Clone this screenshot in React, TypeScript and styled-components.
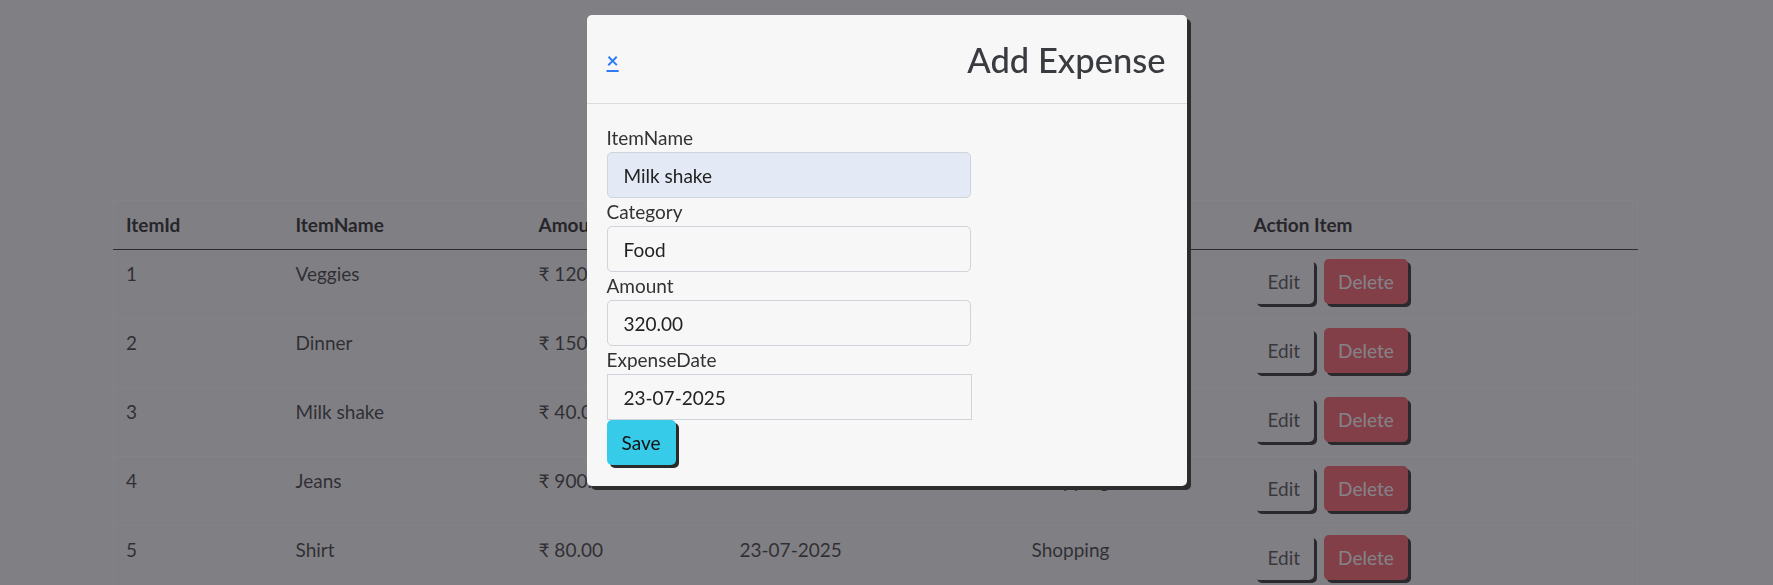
import React from 'react';
import styled, { createGlobalStyle } from 'styled-components';

type Expense = {
  id: number;
  name: string;
  amount: string;
  date: string;
  category: string;
};

const expenses: Expense[] = [
  { id: 1, name: 'Veggies', amount: '120.00', date: '23-07-2025', category: 'Food' },
  { id: 2, name: 'Dinner', amount: '150.00', date: '23-07-2025', category: 'Food' },
  { id: 3, name: 'Milk shake', amount: '40.00', date: '23-07-2025', category: 'Food' },
  { id: 4, name: 'Jeans', amount: '900.00', date: '23-07-2025', category: 'Shopping' },
  { id: 5, name: 'Shirt', amount: '80.00', date: '23-07-2025', category: 'Shopping' },
];

const columns = [
  { label: 'ItemId', width: 170 },
  { label: 'ItemName', width: 243 },
  { label: 'Amount', width: 201 },
  { label: 'ExpenseDate', width: 292 },
  { label: 'Category', width: 222 },
  { label: 'Action Item', width: 396 },
];

const GlobalStyle = createGlobalStyle`
  html, body {
    margin: 0;
    background: #f7f7f7;
    font-family: Lato, "Noto Sans", sans-serif;
    color: #191919;
    overflow: hidden;
  }
  * {
    box-sizing: border-box;
  }
`;

const Page = styled.main`
  padding: 200px 0 0 113px;
`;

const Table = styled.table`
  width: 1524px;
  border-collapse: collapse;
  border: 1px solid #ffffff;
  table-layout: fixed;
  font-size: 19px;
`;

const Th = styled.th<{ $width: number }>`
  width: ${({ $width }) => $width}px;
  padding: 12px;
  line-height: 24px;
  text-align: left;
  font-weight: 700;
  color: #000;
  border-bottom: 1px solid #111;
`;

const Row = styled.tr`
  border-bottom: 1px solid #ffffff;
`;

const Td = styled.td`
  padding: 9px 12px 11px;
  line-height: 30px;
  vertical-align: top;
  color: #1b1b1b;
`;

const Actions = styled.div`
  display: flex;
  gap: 10px;
  padding-bottom: 3px;
`;

const ActionButton = styled.button<{ $danger?: boolean }>`
  height: 45px;
  padding: 0 14px;
  border: none;
  border-radius: 5px;
  font-family: inherit;
  font-size: 19px;
  background: ${({ $danger }) => ($danger ? '#ff4752' : '#f7f7f7')};
  color: ${({ $danger }) => ($danger ? '#ffffff' : '#333333')};
  box-shadow: 3px 3px 0 #0c0c0c;
  cursor: pointer;
`;

const Backdrop = styled.div`
  position: fixed;
  inset: 0;
  background: rgba(60, 58, 66, 0.636);
  display: flex;
  justify-content: center;
  align-items: flex-start;
  padding-top: 15px;
`;

const Modal = styled.div`
  width: 600px;
  background: #f7f7f7;
  border-radius: 5px;
  box-shadow: 4px 4px 0 #2d2d2d;
`;

const ModalHeader = styled.header`
  height: 89px;
  padding: 0 21px 0 20px;
  display: flex;
  align-items: center;
  justify-content: space-between;
  border-bottom: 1px solid #dcdcdc;
`;

const CloseLink = styled.a`
  color: #2f7bf5;
  font-size: 21px;
  font-weight: 700;
  text-decoration: underline;
  cursor: pointer;
`;

const Title = styled.h2`
  margin: 0;
  font-size: 34.5px;
  font-weight: 500;
  color: #393b40;
`;

const ModalBody = styled.form`
  padding: 20px 20px 21px;
  display: flex;
  flex-direction: column;
  align-items: flex-start;
`;

const Label = styled.label`
  display: block;
  font-size: 19px;
  line-height: 28px;
  color: #333333;
`;

const Input = styled.input<{ $filled?: boolean; $square?: boolean }>`
  width: ${({ $square }) => ($square ? 365 : 364)}px;
  height: 46px;
  padding: 0 16px;
  border: 1px solid #ced4da;
  border-radius: ${({ $square }) => ($square ? 0 : 5)}px;
  background: ${({ $filled }) => ($filled ? '#e3e9f5' : '#f7f7f7')};
  font-family: inherit;
  font-size: 19px;
  color: #222222;
  outline: none;
`;

const SaveButton = styled.button`
  height: 45px;
  padding: 0 15px;
  border: none;
  border-radius: 5px;
  background: #35cbe9;
  color: #111111;
  font-family: inherit;
  font-size: 19px;
  box-shadow: 3px 3px 0 #2a2a2a;
  cursor: pointer;
`;

const fields = [
  { label: 'ItemName', value: 'Milk shake', filled: true },
  { label: 'Category', value: 'Food' },
  { label: 'Amount', value: '320.00' },
  { label: 'ExpenseDate', value: '23-07-2025', square: true },
];

export default function App() {
  return (
    <>
      <GlobalStyle />
      <Page>
        <Table>
          <thead>
            <tr>
              {columns.map((c) => (
                <Th key={c.label} $width={c.width}>
                  {c.label}
                </Th>
              ))}
            </tr>
          </thead>
          <tbody>
            {expenses.map((e) => (
              <Row key={e.id}>
                <Td>{e.id}</Td>
                <Td>{e.name}</Td>
                <Td>₹ {e.amount}</Td>
                <Td>{e.date}</Td>
                <Td>{e.category}</Td>
                <Td>
                  <Actions>
                    <ActionButton type="button">Edit</ActionButton>
                    <ActionButton type="button" $danger>
                      Delete
                    </ActionButton>
                  </Actions>
                </Td>
              </Row>
            ))}
          </tbody>
        </Table>
      </Page>

      <Backdrop>
        <Modal>
          <ModalHeader>
            <CloseLink href="#">×</CloseLink>
            <Title>Add Expense</Title>
          </ModalHeader>
          <ModalBody onSubmit={(ev) => ev.preventDefault()}>
            {fields.map((f) => (
              <React.Fragment key={f.label}>
                <Label>{f.label}</Label>
                <Input
                  defaultValue={f.value}
                  $filled={f.filled}
                  $square={f.square}
                />
              </React.Fragment>
            ))}
            <SaveButton type="submit">Save</SaveButton>
          </ModalBody>
        </Modal>
      </Backdrop>
    </>
  );
}
